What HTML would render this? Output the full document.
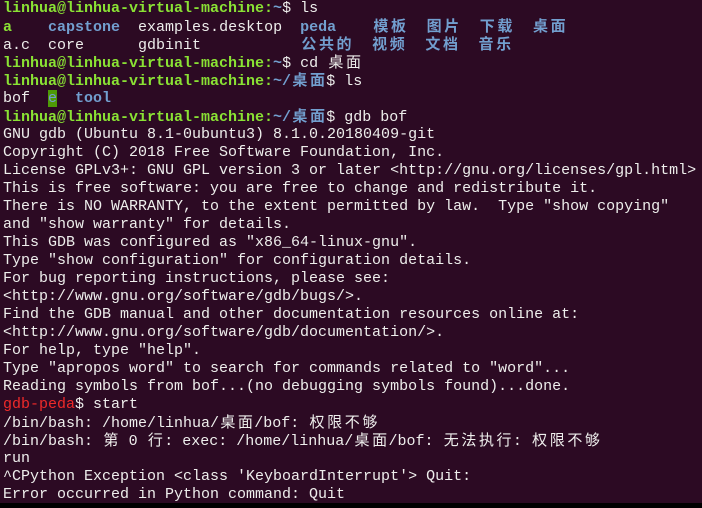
<!DOCTYPE html>
<html><head><meta charset="utf-8"><style>
html,body{margin:0;padding:0;width:702px;height:508px;overflow:hidden;background:#000;}
#t{position:absolute;left:0;top:0;width:702px;height:503px;background:#2c0a23;}
.r{position:absolute;left:3px;height:18px;line-height:18px;white-space:pre;font-family:"Liberation Mono","Noto Sans CJK SC",monospace;font-size:15px;color:#eeeeec;}
.g{color:#8ae234;font-weight:bold}
.b{color:#729fcf;font-weight:bold}
.red{color:#ef2929}
.w{display:inline-block;width:17.6px;text-align:center;font-family:"Noto Sans CJK SC",sans-serif;font-size:15px;line-height:1;vertical-align:baseline}
.hl{background:#4e9a06;color:#729fcf}
</style></head><body><div id="t">
<div class="r" style="top:0"><span class="g">linhua@linhua-virtual-machine:</span><span class="b">~</span>$ ls</div>
<div class="r" style="top:18px"><span class="g">a</span>    <span class="b">capstone</span>  examples.desktop  <span class="b">peda</span>    <span class="b"><span class="w">模</span><span class="w">板</span></span>  <span class="b"><span class="w">图</span><span class="w">片</span></span>  <span class="b"><span class="w">下</span><span class="w">载</span></span>  <span class="b"><span class="w">桌</span><span class="w">面</span></span></div>
<div class="r" style="top:36px">a.c  core      gdbinit           <span class="b"><span class="w">公</span><span class="w">共</span><span class="w">的</span></span>  <span class="b"><span class="w">视</span><span class="w">频</span></span>  <span class="b"><span class="w">文</span><span class="w">档</span></span>  <span class="b"><span class="w">音</span><span class="w">乐</span></span></div>
<div class="r" style="top:54px"><span class="g">linhua@linhua-virtual-machine:</span><span class="b">~</span>$ cd <span class="w">桌</span><span class="w">面</span></div>
<div class="r" style="top:72px"><span class="g">linhua@linhua-virtual-machine:</span><span class="b">~/<span class="w">桌</span><span class="w">面</span></span>$ ls</div>
<div class="r" style="top:90px">bof  <span class="hl">e</span>  <span class="b">tool</span></div>
<div class="r" style="top:108px"><span class="g">linhua@linhua-virtual-machine:</span><span class="b">~/<span class="w">桌</span><span class="w">面</span></span>$ gdb bof</div>
<div class="r" style="top:126px">GNU gdb (Ubuntu 8.1-0ubuntu3) 8.1.0.20180409-git</div>
<div class="r" style="top:144px">Copyright (C) 2018 Free Software Foundation, Inc.</div>
<div class="r" style="top:162px">License GPLv3+: GNU GPL version 3 or later &lt;http://gnu.org/licenses/gpl.html&gt;</div>
<div class="r" style="top:180px">This is free software: you are free to change and redistribute it.</div>
<div class="r" style="top:198px">There is NO WARRANTY, to the extent permitted by law.  Type "show copying"</div>
<div class="r" style="top:216px">and "show warranty" for details.</div>
<div class="r" style="top:234px">This GDB was configured as "x86_64-linux-gnu".</div>
<div class="r" style="top:252px">Type "show configuration" for configuration details.</div>
<div class="r" style="top:270px">For bug reporting instructions, please see:</div>
<div class="r" style="top:288px">&lt;http://www.gnu.org/software/gdb/bugs/&gt;.</div>
<div class="r" style="top:306px">Find the GDB manual and other documentation resources online at:</div>
<div class="r" style="top:324px">&lt;http://www.gnu.org/software/gdb/documentation/&gt;.</div>
<div class="r" style="top:342px">For help, type "help".</div>
<div class="r" style="top:360px">Type "apropos word" to search for commands related to "word"...</div>
<div class="r" style="top:378px">Reading symbols from bof...(no debugging symbols found)...done.</div>
<div class="r" style="top:396px"><span class="red">gdb-peda</span>$ start</div>
<div class="r" style="top:414px">/bin/bash: /home/linhua/<span class="w">桌</span><span class="w">面</span>/bof: <span class="w">权</span><span class="w">限</span><span class="w">不</span><span class="w">够</span></div>
<div class="r" style="top:432px">/bin/bash: <span class="w">第</span> 0 <span class="w">行</span>: exec: /home/linhua/<span class="w">桌</span><span class="w">面</span>/bof: <span class="w">无</span><span class="w">法</span><span class="w">执</span><span class="w">行</span>: <span class="w">权</span><span class="w">限</span><span class="w">不</span><span class="w">够</span></div>
<div class="r" style="top:450px">run</div>
<div class="r" style="top:468px">^CPython Exception &lt;class 'KeyboardInterrupt'&gt; Quit:</div>
<div class="r" style="top:486px">Error occurred in Python command: Quit</div>
</div></body></html>
